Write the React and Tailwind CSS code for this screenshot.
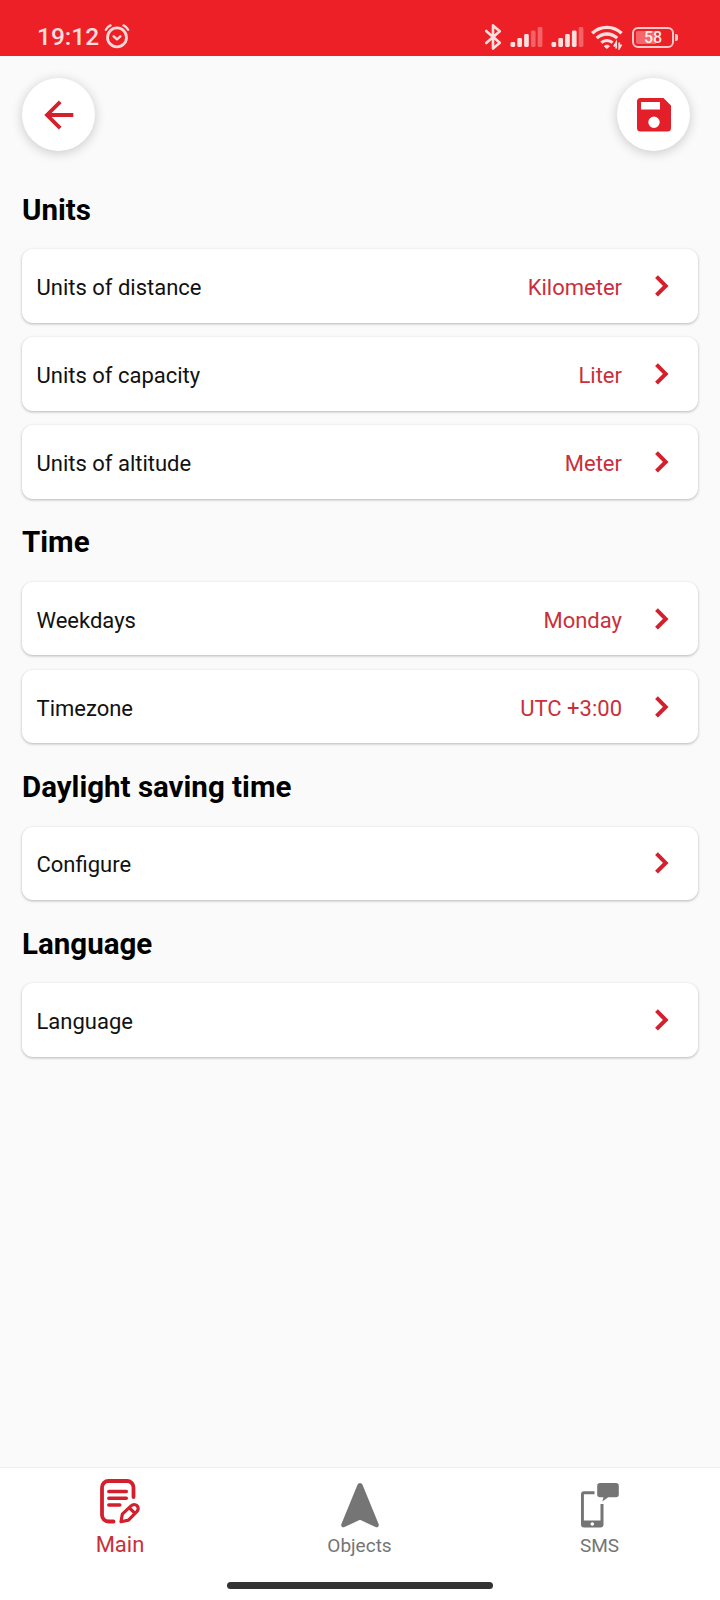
import React, { useState } from "react";

const sections = [
  {
    title: "Units",
    items: [
      { label: "Units of distance", value: "Kilometer" },
      { label: "Units of capacity", value: "Liter" },
      { label: "Units of altitude", value: "Meter" },
    ],
  },
  {
    title: "Time",
    items: [
      { label: "Weekdays", value: "Monday" },
      { label: "Timezone", value: "UTC +3:00" },
    ],
  },
  { title: "Daylight saving time", items: [{ label: "Configure" }] },
  { title: "Language", items: [{ label: "Language" }] },
];

const AlarmIcon = () => (
  <svg width="26" height="26" viewBox="0 0 28 28" fill="none" stroke="#ffd9d6" strokeLinecap="round">
    <circle cx="14" cy="15.5" r="10.2" strokeWidth="3" />
    <path d="M10.4 14.4l3.6 3.2 3.6-3.2" strokeWidth="2.6" strokeLinejoin="round" />
    <path d="M2 7.2c1-2 2.8-3.6 5-4.6M26 7.2c-1-2-2.8-3.6-5-4.6" strokeWidth="2.6" />
  </svg>
);

const BluetoothIcon = () => (
  <svg width="18" height="28" viewBox="0 0 18 28" fill="none" stroke="#ffe0de" strokeWidth="2.6" strokeLinejoin="round" strokeLinecap="round">
    <path d="M2.2 8l13.6 11.7-6.8 5.9V2.4l6.8 5.9L2.2 20" />
  </svg>
);

const SignalIcon = ({ level }) => (
  <svg width="33" height="22" viewBox="0 0 33 22" fill="#ffe0de">
    {[5, 9, 13, 16.5, 20].map((h, i) => (
      <rect key={h} x={0.5 + i * 6.8} y={21 - h} width="4.7" height={h} rx="1.4" opacity={i < level ? 1 : 0.35} />
    ))}
  </svg>
);

const WifiIcon = () => (
  <svg width="32" height="26" viewBox="0 0 32 26" fill="none" stroke="#ffe0de">
    <path d="M1.2 9.3a21 21 0 0 1 29.4 0" strokeWidth="3.3" />
    <path d="M5.7 14.2a14.5 14.5 0 0 1 20.4 0" strokeWidth="3.3" />
    <path d="M10.2 18.7a8.4 8.4 0 0 1 11.4 0" strokeWidth="3" />
    <path d="M12.8 22.2a4.6 4.6 0 0 1 6.2 0l-3.1 2.8z" fill="#ffe0de" stroke="none" />
    <path d="M25.2 24.5v-6l-2.3 4M28.2 18.5v6l2.3-4" strokeWidth="1.7" />
  </svg>
);

const BatteryIcon = () => (
  <div className="flex items-center gap-px">
    <div className="w-[42px] h-[21px] rounded-[6px] border-2 border-[#ffc9c7] p-[2px]">
      <div className="h-full rounded-[2px] bg-linear-to-r from-[#f4666a] from-58% to-transparent to-58% text-[16px] font-medium leading-[14.5px] text-center text-[#ffe9e8]">
        58
      </div>
    </div>
    <div className="w-[3px] h-[7px] rounded-r-[2px] bg-[#ffc9c7]"></div>
  </div>
);

const StatusBar = () => (
  <div className="flex justify-between h-14 bg-[#ed2027] pl-[37px] pr-[42px] pt-[22px]">
    <div className="flex items-center gap-[5px] h-[30px]">
      <span className="text-[24.5px] font-medium leading-[30px] text-[#ffdedc]">19:12</span>
      <div className="-mt-[2px]">
        <AlarmIcon />
      </div>
    </div>
    <div className="flex items-center h-[30px]">
      <BluetoothIcon />
      <div className="ml-[8px]">
        <SignalIcon level={3} />
      </div>
      <div className="ml-[8px]">
        <SignalIcon level={4} />
      </div>
      <div className="ml-[7px] mr-[9px]">
        <WifiIcon />
      </div>
      <BatteryIcon />
    </div>
  </div>
);

const BackIcon = () => (
  <svg width="30" height="30" viewBox="0 0 30 30" fill="none" stroke="#d3202c" strokeWidth="3.8">
    <path d="M29.3 15H3M16.2 1.8L3 15l13.2 13.2" />
  </svg>
);

const SaveIcon = () => (
  <svg width="34" height="34" viewBox="0 0 34 34" fill="#e3202a">
    <path
      fillRule="evenodd"
      d="M3.5 0h23L34 7.5V30a3.5 3.5 0 0 1-3.5 3.5h-27A3.5 3.5 0 0 1 0 30V3.5A3.5 3.5 0 0 1 3.5 0zM4 4v7.5h19V4zM17 18.5a5.7 5.7 0 1 0 0 11.4a5.7 5.7 0 1 0 0-11.4z"
    />
  </svg>
);

const ChevronIcon = () => (
  <svg width="14" height="22" viewBox="0 0 14 22" fill="none" stroke="#d3202c" strokeWidth="4">
    <path d="M1.5 1.7l9.2 9.2-9.2 9.2" />
  </svg>
);

const MainIcon = () => (
  <svg width="40" height="45" viewBox="0 0 40 45" fill="none" stroke="currentColor" strokeLinecap="round" strokeLinejoin="round">
    <path d="M13.5 42.5H8.5A6.5 6.5 0 0 1 2 36V8.500A6.500 6.500 0 0 1 8.500 2H27a6.500 6.500 0 0 1 6.500 6.500V18" strokeWidth="3.8" />
    <path d="M8.8 12.5h17.5M8.8 19.3h17.5M8.8 26h11" strokeWidth="3.5" />
    <path d="M21 42.7l1.3-7.5 9-8.5a4 4 0 0 1 5.7 5.7l-8.500 8.700zM29.500 28.800l5.500 5.500" strokeWidth="3.2" />
  </svg>
);

const ObjectsIcon = () => (
  <svg width="38" height="45" viewBox="0 0 38 45" fill="currentColor">
    <path d="M16.6 1.6a2.6 2.6 0 0 1 4.8 0l16.2 39.3c.8 2-.9 4-3 3.200L19 36.800 3.400 44.100c-2.100.8-3.800-1.200-3-3.200z" />
  </svg>
);

const SmsIcon = () => (
  <svg width="38" height="45" viewBox="0 0 38 45" fill="currentColor">
    <path d="M19 0h16a2.800 2.800 0 0 1 2.800 2.800v8.700a2.800 2.800 0 0 1-2.800 2.800h-7.800L21.300 18.500l1.200-4.200H19a2.800 2.800 0 0 1-2.800-2.800V2.800A2.800 2.800 0 0 1 19 0z" />
    <path
      fillRule="evenodd"
      d="M13.500 8.300H3a3 3 0 0 0-3 3V41.500a3 3 0 0 0 3 3h16.500a3 3 0 0 0 3-3V21h-3v16.500H2.900V11.200h10.600zM11.300 39.200a1.800 1.800 0 1 0 0 3.600a1.800 1.800 0 1 0 0-3.600z"
    />
  </svg>
);

const RoundButton = ({ label, children }) => (
  <button
    aria-label={label}
    className="flex items-center justify-center size-[73px] rounded-full bg-white shadow-[0_2px_12px_rgba(0,0,0,0.2)] cursor-pointer"
  >
    {children}
  </button>
);

const SettingRow = ({ label, value }) => (
  <button className="flex items-center w-full h-[73.5px] rounded-[11px] bg-white pl-[14.5px] pr-[29px] shadow-[0_1px_3px_rgba(0,0,0,0.28)] cursor-pointer">
    <span className="text-[22px] leading-[26px] pt-[4px] text-[#111111]">{label}</span>
    <span className="ml-auto mr-[33px] text-[22px] leading-[26px] pt-[4px] text-[#c9303a]">{value}</span>
    <ChevronIcon />
  </button>
);

const tabs = [
  { name: "Main", icon: MainIcon },
  { name: "Objects", icon: ObjectsIcon },
  { name: "SMS", icon: SmsIcon },
];

const App = () => {
  const [activeTab, setActiveTab] = useState("Main");

  return (
    <div className="flex flex-col w-[720px] h-[1600px] bg-[#fafafa] font-[Roboto,sans-serif]">
      <StatusBar />

      <div className="flex justify-between pl-[22px] pr-[30px] pt-[22px]">
        <RoundButton label="Back">
          <BackIcon />
        </RoundButton>
        <RoundButton label="Save">
          <SaveIcon />
        </RoundButton>
      </div>

      <div className="flex-1 px-[22px] pt-[15px]">
        {sections.map((section) => (
          <section key={section.title}>
            <h2 className="h-[83.2px] pt-[25.6px] text-[29.5px] font-bold leading-[36px] text-black">
              {section.title}
            </h2>
            <div className="flex flex-col gap-[14.5px]">
              {section.items.map((item) => (
                <SettingRow key={item.label} label={item.label} value={item.value} />
              ))}
            </div>
          </section>
        ))}
      </div>

      <nav className="h-[133px] bg-white border-t border-[#efefef]">
        <div className="grid grid-cols-3 h-[114px]">
          {tabs.map(({ name, icon: Icon }) =>
            name === activeTab ? (
              <button key={name} className="flex flex-col items-center pt-[11px] text-[#d3202c]">
                <Icon />
                <span className="mt-[8px] text-[22px] leading-[26px] text-[#c9303a]">{name}</span>
              </button>
            ) : (
              <button
                key={name}
                onClick={() => setActiveTab(name)}
                className="flex flex-col items-center pt-[15px] pr-px text-[#757575] cursor-pointer"
              >
                <Icon />
                <span className="mt-[6px] text-[19px] leading-[24px]">{name}</span>
              </button>
            )
          )}
        </div>
        <div className="mx-auto w-[266px] h-[7px] rounded-full bg-[#333333]"></div>
      </nav>
    </div>
  );
};

export default App;
